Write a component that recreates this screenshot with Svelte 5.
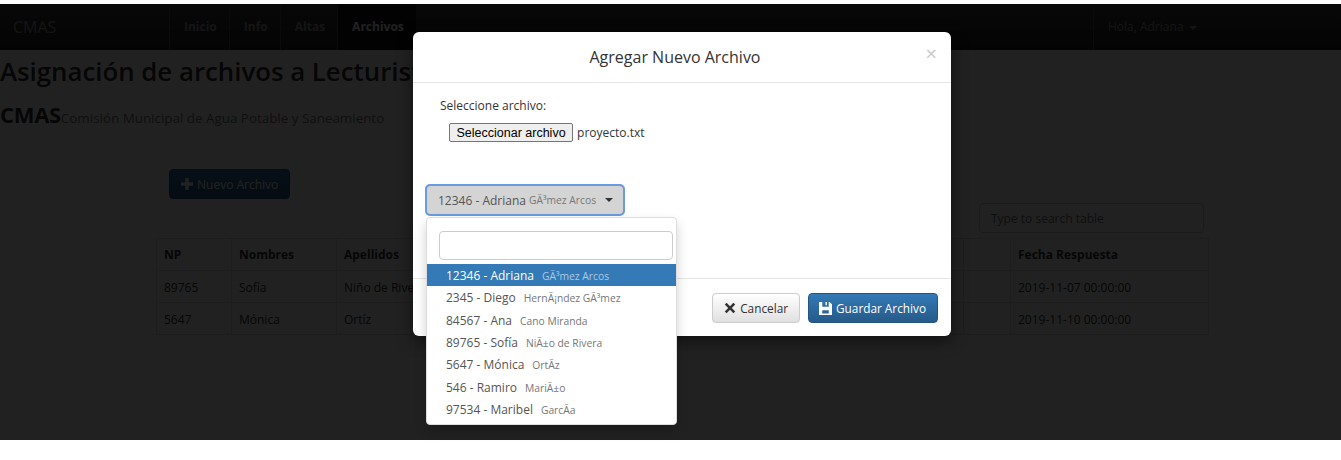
<script lang="ts">
  const owners = [
    { np: '12346', name: 'Adriana', last: 'GÃ³mez Arcos' },
    { np: '2345', name: 'Diego', last: 'HernÃ¡ndez GÃ³mez' },
    { np: '84567', name: 'Ana', last: 'Cano Miranda' },
    { np: '89765', name: 'Sofía', last: 'NiÃ±o de Rivera' },
    { np: '5647', name: 'Mónica', last: 'OrtÃ­z' },
    { np: '546', name: 'Ramiro', last: 'MariÃ±o' },
    { np: '97534', name: 'Maribel', last: 'GarcÃ­a' }
  ];

  const rows = [
    { np: '89765', name: 'Sofía', last: 'Niño de Rivera', date: '2019-11-07 00:00:00' },
    { np: '5647', name: 'Mónica', last: 'Ortíz', date: '2019-11-10 00:00:00' }
  ];

  let selected = $state(0);
</script>

<div class="page">
  <nav class="navbar">
    <a class="brand" href="#top">CMAS</a>
    <ul class="nav">
      <li>Inicio</li>
      <li>Info</li>
      <li>Altas</li>
      <li class="active">Archivos</li>
    </ul>
    <div class="user">Hola, Adriana <span class="caret light"></span></div>
  </nav>

  <h2>Asignación de archivos a Lecturistas</h2>
  <div class="subtitle"><strong>CMAS</strong><span>Comisión Municipal de Agua Potable y Saneamiento</span></div>

  <div class="content">
    <div class="toolbar">
      <button class="btn-new">
        <svg class="icon" viewBox="0 0 14 14"><path d="M5 0h4v5h5v4H9v5H5V9H0V5h5z" /></svg>
        Nuevo Archivo
      </button>
      <input class="search" placeholder="Type to search table" />
    </div>
    <table>
      <colgroup>
        <col style="width: 75px" />
        <col style="width: 105px" />
        <col style="width: 627px" />
        <col style="width: 47px" />
        <col />
      </colgroup>
      <thead>
        <tr><th>NP</th><th>Nombres</th><th>Apellidos</th><th></th><th>Fecha Respuesta</th></tr>
      </thead>
      <tbody>
        {#each rows as row}
          <tr><td>{row.np}</td><td>{row.name}</td><td>{row.last}</td><td></td><td>{row.date}</td></tr>
        {/each}
      </tbody>
    </table>
  </div>

  <div class="backdrop"></div>

  <div class="modal">
    <div class="modal-header">
      <h4>Agregar Nuevo Archivo</h4>
      <span class="close">×</span>
    </div>
    <div class="modal-body">
      <div class="file-label">Seleccione archivo:</div>
      <div class="file-row">
        <button class="file-btn">Seleccionar archivo</button>
        <span>proyecto.txt</span>
      </div>
      <div class="picker">
        <button class="picker-btn">
          {owners[selected].np} - {owners[selected].name}
          <small>{owners[selected].last}</small>
          <span class="caret"></span>
        </button>
        <div class="menu">
          <div class="menu-search"><input /></div>
          <ul>
            {#each owners as owner, i}
              <li class:active={i === selected}>
                <button onclick={() => (selected = i)}>
                  {owner.np} - {owner.name}<small>{owner.last}</small>
                </button>
              </li>
            {/each}
          </ul>
        </div>
      </div>
    </div>
    <div class="modal-footer">
      <button class="btn-cancel">
        <svg class="icon" viewBox="0 0 12 12"><path d="M2.6 .8 6 4.2 9.4 .8l1.8 1.8L7.8 6l3.4 3.4-1.8 1.8L6 7.8l-3.4 3.4-1.8-1.8L4.2 6 .8 2.6z" /></svg>
        Cancelar
      </button>
      <button class="btn-save">
        <svg class="icon floppy" viewBox="0 0 14 14"><path fill-rule="evenodd" d="M0 0h11.5L14 2.5V14H0zM3.5 0v5h7V0H8.5v3.5H7V0zM3.5 9v3.5h7V9z" /></svg>
        Guardar Archivo
      </button>
    </div>
  </div>
</div>

<style>
  :global(body) {
    margin: 0;
    background: #fff;
  }

  .page {
    position: relative;
    height: 460px;
    padding-top: 4px;
    box-sizing: border-box;
    overflow: hidden;
    font-family: "Open Sans", sans-serif;
    font-size: 12px;
    color: #333;
  }

  .navbar {
    display: flex;
    align-items: stretch;
    height: 46px;
    background: linear-gradient(to bottom, #3c3c3c, #222);
    color: #9d9d9d;
  }

  .brand {
    width: 169px;
    padding-left: 13px;
    box-sizing: border-box;
    line-height: 46px;
    font-size: 16px;
    color: #9d9d9d;
    text-decoration: none;
  }

  .nav {
    display: flex;
    flex: 1;
    margin: 0;
    padding: 0;
    list-style: none;
  }

  .nav li {
    padding: 0 12px 0 14px;
    line-height: 46px;
    font-weight: 700;
    border-left: 1px solid #4c4c4c;
  }

  .nav li.active {
    background: #111;
    color: #fff;
  }

  .user {
    width: 248px;
    padding-left: 14px;
    box-sizing: border-box;
    line-height: 46px;
    border-left: 1px solid #4c4c4c;
  }

  h2 {
    margin: 3px 0 0;
    font-size: 25.8px;
    line-height: 36px;
    font-weight: 600;
    white-space: nowrap;
  }

  .subtitle {
    margin-top: 10px;
    line-height: 30px;
    font-size: 13.4px;
    color: #777;
  }

  .subtitle strong {
    font-size: 22px;
    letter-spacing: -0.3px;
    color: #333;
  }

  .content {
    padding: 36px 132px 0 156px;
  }

  .toolbar {
    display: flex;
    justify-content: space-between;
    align-items: flex-start;
    height: 69px;
    padding: 0 5px 0 13px;
  }

  .btn-new {
    display: flex;
    align-items: center;
    gap: 4px;
    height: 30px;
    padding: 0 11px;
    font: inherit;
    color: #fff;
    background: linear-gradient(to bottom, #337ab7, #265a88);
    border: 1px solid #245580;
    border-radius: 4px;
  }

  .icon {
    width: 12px;
    height: 12px;
    fill: currentColor;
    flex: none;
  }

  .search {
    width: 225px;
    height: 30px;
    margin-top: 34px;
    padding: 0 11px;
    box-sizing: border-box;
    font: inherit;
    border: 1px solid #ccc;
    border-radius: 4px;
  }

  table {
    width: 1053px;
    border-collapse: collapse;
    table-layout: fixed;
  }

  th,
  td {
    height: 32px;
    padding: 0 7px;
    box-sizing: border-box;
    text-align: left;
    border: 1px solid #ddd;
    white-space: nowrap;
  }

  td {
    padding-top: 1px;
  }

  .backdrop {
    position: absolute;
    top: 4px;
    left: 0;
    right: 0;
    height: 436px;
    background: rgba(0, 0, 0, 0.87);
  }

  .modal {
    position: absolute;
    top: 32px;
    left: 413px;
    width: 538px;
    height: 304px;
    background: #fff;
    border-radius: 6px;
    box-shadow: 0 5px 15px rgba(0, 0, 0, 0.5);
    display: flex;
    flex-direction: column;
  }

  .modal-header {
    position: relative;
    height: 51px;
    padding-right: 14px;
    box-sizing: border-box;
    border-bottom: 1px solid #e5e5e5;
    display: flex;
    align-items: center;
    justify-content: center;
  }

  h4 {
    margin: 0;
    font-size: 16px;
    font-weight: 500;
  }

  .close {
    position: absolute;
    top: 10px;
    right: 14px;
    font-size: 20px;
    line-height: 24px;
    color: #c8c8c8;
  }

  .modal-body {
    flex: 1;
    padding: 14px 13px 0;
  }

  .file-label {
    padding-left: 14px;
    line-height: 18px;
  }

  .file-row {
    display: flex;
    align-items: center;
    gap: 4px;
    margin-top: 8px;
    padding-left: 23px;
  }

  .file-btn {
    height: 19px;
    padding: 0 6.5px;
    font-family: "Liberation Sans", Arial, sans-serif;
    font-size: 12.5px;
    color: #000;
    background: #efefef;
    border: 1px solid #767676;
    border-radius: 2px;
  }

  .picker {
    position: relative;
    margin-top: 43px;
  }

  .picker-btn {
    display: flex;
    align-items: center;
    gap: 3px;
    width: 198px;
    height: 30px;
    padding: 0 11px;
    box-sizing: border-box;
    font: inherit;
    color: #555;
    background: #d4d4d4;
    border: 1px solid #adadad;
    border-radius: 4px;
    outline: 2px solid #6a9be0;
    outline-offset: -1px;
    white-space: nowrap;
  }

  .picker-btn small {
    font-size: 10.3px;
    color: #777;
  }

  .caret {
    display: inline-block;
    margin-left: 6px;
    border-top: 4px solid #333;
    border-left: 4px solid transparent;
    border-right: 4px solid transparent;
  }

  .caret.light {
    border-top-color: #9d9d9d;
    margin-left: 2px;
    vertical-align: middle;
  }

  .menu {
    position: absolute;
    top: 32px;
    left: 0;
    z-index: 2;
    width: 251px;
    height: 208px;
    box-sizing: border-box;
    padding-top: 13px;
    background: #fff;
    border: 1px solid #ddd;
    border-radius: 4px;
    box-shadow: 0 6px 12px rgba(0, 0, 0, 0.18);
  }

  .menu-search {
    padding: 0 3px 0 12px;
  }

  .menu-search input {
    display: block;
    width: 100%;
    height: 29px;
    box-sizing: border-box;
    border: 1px solid #ccc;
    border-radius: 4px;
  }

  .menu ul {
    margin: 4px 0 0;
    padding: 0;
    list-style: none;
  }

  .menu li button {
    display: block;
    width: 100%;
    height: 22.3px;
    padding: 1px 0 0 19px;
    font: inherit;
    text-align: left;
    color: #555;
    background: none;
    border: 0;
    white-space: nowrap;
  }

  .menu li small {
    margin-left: 8px;
    font-size: 10.3px;
    color: #777;
  }

  .menu li.active button {
    color: #fff;
    background: #337ab7;
  }

  .menu li.active small {
    color: rgba(255, 255, 255, 0.6);
  }

  .modal-footer {
    height: 58px;
    box-sizing: border-box;
    padding: 14px 13px 0 0;
    border-top: 1px solid #e5e5e5;
    display: flex;
    justify-content: flex-end;
    align-items: flex-start;
    gap: 8px;
  }

  .modal-footer button {
    display: flex;
    align-items: center;
    gap: 4px;
    height: 30px;
    padding: 0 11px;
    font: inherit;
    font-size: 11.8px;
    border-radius: 4px;
  }

  .modal-footer .btn-save {
    padding-left: 10px;
  }

  .floppy {
    width: 13px;
    height: 13px;
  }

  .btn-cancel {
    color: #333;
    background: linear-gradient(to bottom, #fff, #e0e0e0);
    border: 1px solid #ccc;
  }

  .btn-save {
    color: #fff;
    background: linear-gradient(to bottom, #337ab7, #265a88);
    border: 1px solid #245580;
  }
</style>
